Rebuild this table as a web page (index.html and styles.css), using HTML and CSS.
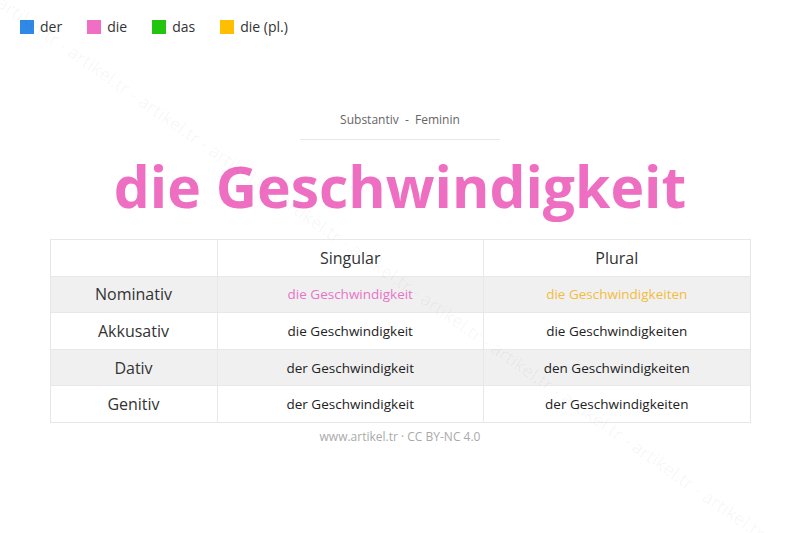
FILE: index.html
```html
<!DOCTYPE html>
<html lang="de">
<head>
<meta charset="utf-8">
<title>die Geschwindigkeit</title>
<link rel="stylesheet" href="styles.css">
</head>
<body>
<div class="legend">
  <span class="item"><span class="sq der"></span>der</span>
  <span class="item"><span class="sq die"></span>die</span>
  <span class="item"><span class="sq das"></span>das</span>
  <span class="item"><span class="sq pl"></span>die (pl.)</span>
</div>
<main class="main">
  <div class="sub">Substantiv&nbsp; - &nbsp;Feminin</div>
  <h1 class="title">die Geschwindigkeit</h1>
  <table class="decl">
    <tr class="head"><td class="case"></td><td>Singular</td><td>Plural</td></tr>
    <tr class="alt"><td class="case">Nominativ</td><td class="c-die">die Geschwindigkeit</td><td class="c-pl">die Geschwindigkeiten</td></tr>
    <tr><td class="case">Akkusativ</td><td>die Geschwindigkeit</td><td>die Geschwindigkeiten</td></tr>
    <tr class="alt"><td class="case">Dativ</td><td>der Geschwindigkeit</td><td>den Geschwindigkeiten</td></tr>
    <tr><td class="case">Genitiv</td><td>der Geschwindigkeit</td><td>der Geschwindigkeiten</td></tr>
  </table>
  <div class="foot">www.artikel.tr · CC BY-NC 4.0</div>
</main>
<div class="wm-layer" aria-hidden="true">
  <div class="watermark">artikel.tr - artikel.tr - artikel.tr - artikel.tr - artikel.tr - artikel.tr - artikel.tr - artikel.tr - artikel.tr - artikel.tr - artikel.tr</div>
</div>
</body>
</html>
```
FILE: styles.css
```css
html, body {
  margin: 0;
  padding: 0;
  background: #fff;
}
body {
  font-family: "Open Sans", "Noto Sans", sans-serif;
  color: #333;
  width: 800px;
  height: 533px;
  overflow: hidden;
  position: relative;
}
.legend {
  display: flex;
  padding: 17px 0 0 20px;
  font-size: 14px;
  line-height: 20px;
  color: #333;
}
.item {
  display: flex;
  align-items: center;
  margin-right: 25px;
}
.sq {
  width: 14px;
  height: 14px;
  margin-right: 6px;
  display: inline-block;
}
.der { background: #2e8ae6; }
.die { background: #f06ec4; }
.das { background: #22c40e; }
.pl { background: #ffbe00; }
.main {
  width: 701px;
  margin: 0 auto;
  display: flex;
  flex-direction: column;
  align-items: center;
}
.sub {
  margin-top: 74px;
  width: 200px;
  text-align: center;
  font-size: 12px;
  line-height: 18px;
  color: #666;
  padding-bottom: 10px;
  border-bottom: 1px solid #e8e8e8;
}
.title {
  margin: 2px 0 0;
  font-size: 57px;
  line-height: 88px;
  font-weight: 700;
  color: #ee6ec2;
  letter-spacing: 0;
}
.decl {
  margin-top: 9px;
  width: 701px;
  border-collapse: collapse;
  table-layout: fixed;
  border: 1px solid #e6e6e6;
}
.decl td {
  border-left: 1px solid #e8e8e8;
  text-align: center;
  font-size: 13.5px;
  color: #222;
  height: 35.6px;
  padding: 0;
}
.decl td.case {
  width: 166px;
  font-size: 16px;
  color: #333;
  border-left: none;
}
.decl tr.head td {
  font-size: 16px;
  color: #333;
}
.decl tr {
  border-top: 1px solid #e8e8e8;
}
.decl tr.alt td {
  background: #f0f0f0;
}
.decl td.c-die { color: #e874c8; }
.decl td.c-pl { color: #f3bd3c; }
.foot {
  margin-top: 6px;
  font-size: 12px;
  line-height: 16px;
  color: #aaa;
}
.wm-layer {
  position: absolute;
  inset: 0;
  overflow: hidden;
  pointer-events: none;
}
.watermark {
  position: absolute;
  left: 0;
  top: -12px;
  white-space: nowrap;
  font-size: 18px;
  color: rgba(0, 0, 0, 0.045);
  transform-origin: 0 50%;
  transform: rotate(35deg);
}
```
